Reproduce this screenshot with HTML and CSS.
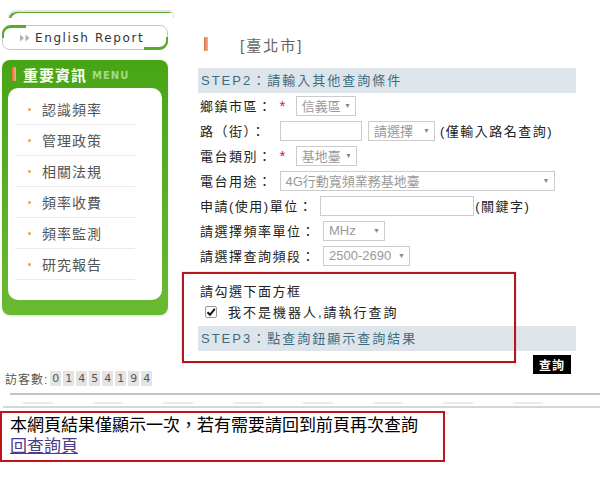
FILE: index.html
```html
<!DOCTYPE html>
<html lang="zh-Hant">
<head>
  <meta charset="UTF-8">
  <title>電台查詢</title>
  <link rel="stylesheet" href="styles.css">
</head>
<body>
  <div class="page">
    <div class="top">
      <aside class="sidebar">
        <div class="stub"></div>
        <a class="eng-btn" href="#"><svg class="arrows" width="12" height="8" viewBox="0 0 12 8"><path d="M1 0.5 L5 4 L1 7.5 Z M6.5 0.5 L10.5 4 L6.5 7.5 Z" fill="#b0b0b0"/></svg>English Report</a>
        <div class="menu-box">
          <div class="menu-head">
            <span class="mark"></span>
            <span class="menu-title">重要資訊</span>
            <span class="menu-en">MENU</span>
          </div>
          <ul class="menu-list">
            <li>認識頻率</li>
            <li>管理政策</li>
            <li>相關法規</li>
            <li>頻率收費</li>
            <li>頻率監測</li>
            <li>研究報告</li>
          </ul>
        </div>
        <div class="counter">訪客數:<span>0</span><span>1</span><span>4</span><span>5</span><span>4</span><span>1</span><span>9</span><span>4</span></div>
      </aside>

      <main class="main">
        <div class="city"><span class="mark"></span>[臺北市]</div>

        <div class="step">STEP2：請輸入其他查詢條件</div>
        <div class="row"><span class="lbl">鄉鎮市區：</span><span class="req">*</span><span class="sel w60">信義區<i>▼</i></span></div>
        <div class="row"><span class="lbl">路（街）：</span><span class="inp w82 wide"></span><span class="sel w67">請選擇<i>▼</i></span><span class="note">(僅輸入路名查詢)</span></div>
        <div class="row"><span class="lbl">電台類別：</span><span class="req">*</span><span class="sel w61">基地臺<i>▼</i></span></div>
        <div class="row"><span class="lbl">電台用途：</span><span class="sel w275">4G行動寬頻業務基地臺<i>▼</i></span></div>
        <div class="row"><span class="lbl">申請(使用)單位：</span><span class="inp w154"></span><span class="note tight">(關鍵字)</span></div>
        <div class="row"><span class="lbl">請選擇頻率單位：</span><span class="sel w62">MHz<i>▼</i></span></div>
        <div class="row"><span class="lbl">請選擇查詢頻段：</span><span class="sel w87">2500-2690<i>▼</i></span></div>

        <div class="verify">
          <div class="hint">請勾選下面方框</div>
          <label class="check"><span class="box"><svg width="10" height="10" viewBox="0 0 10 10"><path d="M1.5 5.2 L4 7.8 L8.8 1.8" fill="none" stroke="#111" stroke-width="2"/></svg></span>我不是機器人,請執行查詢</label>
          <div class="step">STEP3：點查詢鈕顯示查詢結果</div>
          <div class="outline"></div>
        </div>
        <div class="actions"><button class="query">查詢</button></div>
      </main>
    </div>

    <div class="rule"></div>
    <div class="ghost">
      <span></span><span></span><span></span><span></span><span></span><span></span><span></span><span></span>
    </div>

    <div class="notice">
      <p>本網頁結果僅顯示一次，若有需要請回到前頁再次查詢</p>
      <a href="#">回查詢頁</a>
    </div>
  </div>
</body>
</html>
```

FILE: styles.css
```css
* {
  margin: 0;
  padding: 0;
  box-sizing: border-box;
}

body {
  font-family: "Liberation Sans", "Noto Sans CJK TC", sans-serif;
  background-color: #fff;
  color: #222;
  width: 600px;
  height: 498px;
  overflow: hidden;
}

.top {
  display: flex;
}

/* Sidebar */
.sidebar {
  width: 166px;
  margin-left: 2px;
  flex-shrink: 0;
}

.stub {
  height: 8px;
  margin: 10px -6px 7px 6px;
  border: 1px solid #ddd;
  border-bottom: none;
  border-radius: 8px 8px 0 0;
  border-top-left-radius: 12px;
  border-top: 2px solid #e4e4e4;
  box-shadow: inset 3px 2px 0 -1px #5aa92a;
}

.eng-btn {
  position: relative;
  display: flex;
  align-items: center;
  height: 25px;
  border: 1px solid #c8c8c8;
  border-radius: 8px;
  color: #333;
  text-decoration: none;
  font-family: "DejaVu Sans", sans-serif;
  font-size: 12px;
  letter-spacing: 1.6px;
  padding-left: 16px;
}

.eng-btn::before,
.eng-btn::after {
  content: "";
  position: absolute;
  width: 22px;
  height: 10px;
}

.eng-btn::before {
  left: -1px;
  top: -1px;
  border-top: 3px solid #5aa92a;
  border-left: 2px solid #5aa92a;
  border-top-left-radius: 9px;
}

.eng-btn::after {
  right: -1px;
  bottom: -1px;
  border-bottom: 3px solid #5aa92a;
  border-right: 2px solid #5aa92a;
  border-bottom-right-radius: 9px;
}

.arrows {
  margin-right: 4px;
}

.menu-box {
  margin-top: 10px;
  height: 255px;
  background: linear-gradient(#47a515, #5cb02a 60%, #6ab932);
  border-radius: 8px;
  padding: 0 6px;
  box-shadow: 0 1px 2px rgba(0, 0, 0, 0.15);
}

.menu-head {
  height: 28px;
  display: flex;
  align-items: center;
  padding-left: 4px;
}

.mark {
  display: inline-block;
  width: 4px;
  height: 14px;
  background: linear-gradient(90deg, #e0703a, #f6b08a);
  border-radius: 1px;
}

.menu-title {
  color: #fff;
  font-weight: bold;
  font-size: 15px;
  letter-spacing: 1px;
  margin-left: 7px;
}

.menu-en {
  color: #a6d987;
  font-family: "DejaVu Sans", sans-serif;
  font-weight: bold;
  font-size: 10px;
  letter-spacing: 1px;
  margin-left: 5px;
  margin-top: 3px;
}

.menu-list {
  list-style: none;
  background-color: #fff;
  border-radius: 10px;
  height: 212px;
  padding: 6px 0 0 7px;
}

.menu-list li {
  width: 120px;
  height: 31px;
  display: flex;
  align-items: center;
  border-bottom: 1px solid #eaeaea;
  color: #555;
  font-size: 14px;
  letter-spacing: 1px;
  padding-left: 27px;
  position: relative;
}

.menu-list li::before {
  content: "";
  position: absolute;
  left: 13px;
  top: 14px;
  width: 3px;
  height: 3px;
  border-radius: 50%;
  background-color: #e8a04a;
}

.counter {
  margin-top: 55px;
  margin-left: 3px;
  font-size: 12px;
  color: #555;
  letter-spacing: 1px;
  display: flex;
  align-items: center;
  white-space: nowrap;
}

.counter span {
  display: inline-block;
  width: 11px;
  margin-right: 2px;
  background-color: #e4e4e4;
  font-family: "DejaVu Sans", sans-serif;
  font-size: 11px;
  text-align: center;
  letter-spacing: 0;
  line-height: 15px;
}

.counter span:first-child {
  margin-left: 2px;
}

/* Main */
.main {
  margin-left: 30px;
  width: 378px;
}

.city {
  margin-top: 37px;
  height: 14px;
  display: flex;
  align-items: center;
  font-size: 15px;
  color: #666;
  letter-spacing: 2px;
}

.city .mark {
  margin: 0 32px 0 6px;
}

.step {
  margin-top: 17px;
  height: 25px;
  line-height: 25px;
  background-color: #dde5eb;
  color: #3d6c82;
  font-size: 13px;
  letter-spacing: 2px;
  padding-left: 3px;
}

.row {
  height: 25px;
  display: flex;
  align-items: center;
  font-size: 13px;
  letter-spacing: 1.5px;
  padding-left: 2px;
}

.lbl {
  color: #222;
}

.req {
  color: #d0202a;
  font-size: 15px;
  margin: 0 9px 0 7px;
}

.sel,
.inp {
  height: 20px;
  border: 1px solid #ccc;
  background-color: #fff;
}

.sel {
  display: flex;
  align-items: center;
  justify-content: space-between;
  color: #999;
  font-size: 13px;
  letter-spacing: 0;
  padding: 0 4px 0 5px;
}

.sel i {
  font-style: normal;
  font-size: 7px;
  color: #888;
}

.inp {
  margin-right: 6px;
}

.w60 { width: 60px; }
.w61 { width: 61px; }
.w62 { width: 62px; }
.w67 { width: 67px; }
.w82 { width: 82px; }
.w87 { width: 87px; }
.w154 { width: 154px; }
.w275 { width: 275px; }

.row .lbl + .sel,
.row .lbl + .inp {
  margin-left: 7px;
}

.row .lbl + .inp.wide {
  margin-left: 14px;
}

.note {
  margin-left: 5px;
  color: #222;
}

.note.tight {
  margin-left: -5px;
}

.verify {
  position: relative;
  margin-top: 14px;
}

.hint {
  height: 19px;
  line-height: 19px;
  font-size: 13px;
  letter-spacing: 1.5px;
  padding-left: 2px;
}

.check {
  height: 21px;
  display: flex;
  align-items: center;
  font-size: 13px;
  letter-spacing: 2px;
  padding-left: 7px;
}

.box {
  width: 12px;
  height: 12px;
  border: 1px solid #999;
  border-radius: 2px;
  display: flex;
  align-items: center;
  justify-content: center;
  margin-right: 11px;
  background-color: #fff;
}

.verify .step {
  margin-top: 4px;
}

.outline {
  position: absolute;
  left: -16px;
  top: -10px;
  width: 334px;
  height: 91px;
  border: 2px solid #b3161b;
  box-shadow: 0 0 1px rgba(179, 22, 27, 0.5);
}

.actions {
  display: flex;
  justify-content: flex-end;
  padding-right: 5px;
  margin-top: 4px;
}

.query {
  background-color: #000;
  color: #fff;
  border: none;
  font-family: inherit;
  font-weight: bold;
  font-size: 12px;
  letter-spacing: 1px;
  width: 38px;
  height: 19px;
}

/* Bottom */
.rule {
  margin: 6px 0 0 10px;
  height: 2px;
  background-color: #c4c4c4;
}

.ghost {
  height: 13px;
  margin-left: 3px;
  border-bottom: 2px solid #d6d6d6;
  display: flex;
  gap: 40px;
  align-items: flex-end;
  padding: 0 0 2px 20px;
}

.ghost span {
  width: 30px;
  height: 2px;
  background-color: #eceaf0;
}

.notice {
  margin-top: 3px;
  width: 445px;
  height: 51px;
  border: 2px solid #c0141a;
  padding: 2px 0 0 8px;
}

.notice p {
  font-size: 17px;
  line-height: 22px;
  color: #000;
}

.notice a {
  font-size: 17px;
  line-height: 20px;
  color: #4b3b8c;
}
```
